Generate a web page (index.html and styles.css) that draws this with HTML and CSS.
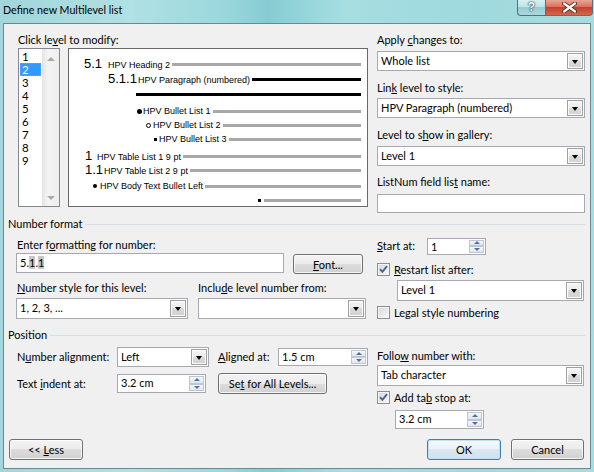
FILE: index.html
```html
<!DOCTYPE html>
<html>
<head>
<meta charset="utf-8">
<title>Define new Multilevel list</title>
<link rel="stylesheet" href="styles.css">
</head>
<body>
<div class="window">
  <div class="titlebar">
    <div class="title">Define new Multilevel list</div>
    <div class="caps">
      <div class="cap cap-help"><span class="qmark">?</span></div>
      <div class="cap cap-close">
        <svg width="15" height="11" viewBox="0 0 15 11"><path d="M2 1.5 L13 9.5 M13 1.5 L2 9.5" stroke="#4a2a22" stroke-width="4" stroke-linecap="round"/><path d="M2 1.5 L13 9.5 M13 1.5 L2 9.5" stroke="#ffffff" stroke-width="2.2" stroke-linecap="round"/></svg>
      </div>
    </div>
  </div>
  <div class="client">
    <div class="sec-top">
      <div class="levels-col">
        <div class="lbl">Click le<u>v</u>el to modify:</div>
        <div class="lists">
          <div class="listbox">
            <div class="items">
              <div class="item">1</div>
              <div class="item sel">2</div>
              <div class="item">3</div>
              <div class="item">4</div>
              <div class="item">5</div>
              <div class="item">6</div>
              <div class="item">7</div>
              <div class="item">8</div>
              <div class="item">9</div>
            </div>
            <div class="vscroll"><span class="sarrow up"></span><span class="sarrow down"></span></div>
          </div>
          <div class="preview">
            <div class="pv r1"><span class="num n24">5.1</span><span class="txt">HPV Heading 2</span><span class="ln"></span></div>
            <div class="pv r2"><span class="num n30">5.1.1</span><span class="txt">HPV Paragraph (numbered)</span><span class="ln blk"></span></div>
            <div class="pv r3"><span class="ln blk flat"></span></div>
            <div class="pv r4"><span class="bul b6"><i class="dot"></i></span><span class="txt">HPV Bullet List 1</span><span class="ln"></span></div>
            <div class="pv r5"><span class="bul b7"><i class="ring"></i></span><span class="txt">HPV Bullet List 2</span><span class="ln"></span></div>
            <div class="pv r6"><span class="bul b5"><i class="sq"></i></span><span class="txt">HPV Bullet List 3</span><span class="ln"></span></div>
            <div class="pv r7"><span class="num n12">1</span><span class="txt">HPV Table List 1 9 pt</span><span class="ln"></span></div>
            <div class="pv r8"><span class="num n19">1.1</span><span class="txt">HPV Table List 2 9 pt</span><span class="ln"></span></div>
            <div class="pv r9"><span class="bul b7"><i class="dot small"></i></span><span class="txt">HPV Body Text Bullet Left</span><span class="ln"></span></div>
            <div class="pv r10"><span class="bul b6"><i class="sq"></i></span><span class="ln flat"></span></div>
          </div>
        </div>
      </div>
      <div class="side">
        <div class="lbl">Apply <u>c</u>hanges to:</div>
        <div class="select h20 mt4"><span class="val">Whole list</span><span class="drop"><i></i></span></div>
        <div class="lbl mt10">Lin<u>k</u> level to style:</div>
        <div class="select h20 mt3"><span class="val">HPV Paragraph (numbered)</span><span class="drop"><i></i></span></div>
        <div class="lbl mt10">Level to s<u>h</u>ow in gallery:</div>
        <div class="select h20 mt4"><span class="val">Level 1</span><span class="drop"><i></i></span></div>
        <div class="lbl mt9">ListNum field lis<u>t</u> name:</div>
        <div class="tb name mt5"></div>
      </div>
    </div>

    <div class="legend lg-fmt"><span>Number format</span><span class="rule"></span></div>

    <div class="sec-fmt">
      <div class="fmt-left">
        <div class="lbl pl1 mt1">Enter f<u>o</u>rmatting for number:</div>
        <div class="row-fmt">
          <div class="tb fmt">5.<span class="fld">1</span>.<span class="fld">1</span></div>
          <div class="btn font"><span><u>F</u>ont...</span></div>
        </div>
        <div class="pair-labels">
          <div class="lbl first"><u>N</u>umber style for this level:</div>
          <div class="lbl">Inclu<u>d</u>e level number from:</div>
        </div>
        <div class="pair-selects">
          <div class="select h21 w172"><span class="val">1, 2, 3, ...</span><span class="drop"><i></i></span></div>
          <div class="select h21 w168"><span class="val"></span><span class="drop"><i></i></span></div>
        </div>
      </div>
      <div class="fmt-right">
        <div class="start">
          <div class="lbl w50"><u>S</u>tart at:</div>
          <div class="spin w59 h17"><span class="val">1</span><span class="arr"><span><i class="tu"></i></span><span><i class="td"></i></span></span></div>
        </div>
        <div class="chkrow mt8">
          <span class="chk"><svg width="11" height="11" viewBox="0 0 11 11"><path d="M2 5.2 L4.4 7.8 L9 2.2" fill="none" stroke="#4a5f98" stroke-width="1.9"/></svg></span>
          <span class="lbl"><u>R</u>estart list after:</span>
        </div>
        <div class="select h21 w187 mt4 ml20"><span class="val">Level 1</span><span class="drop"><i></i></span></div>
        <div class="chkrow mt5">
          <span class="chk"></span>
          <span class="lbl">Le<u>g</u>al style numbering</span>
        </div>
      </div>
    </div>

    <div class="legend lg-pos"><span>Position</span><span class="rule"></span></div>

    <div class="sec-pos">
      <div class="pos-left">
        <div class="prow">
          <div class="lbl w100">N<u>u</u>mber alignment:</div>
          <div class="select h20 w92"><span class="val">Left</span><span class="drop"><i></i></span></div>
          <div class="lbl w60 ml9"><u>A</u>ligned at:</div>
          <div class="spin w90 h18"><span class="val">1.5 cm</span><span class="arr"><span><i class="tu"></i></span><span><i class="td"></i></span></span></div>
        </div>
        <div class="prow prow2">
          <div class="lbl w100">Text <u>i</u>ndent at:</div>
          <div class="spin w89 h19"><span class="val">3.2 cm</span><span class="arr"><span><i class="tu"></i></span><span><i class="td"></i></span></span></div>
          <div class="btn setall"><span>Se<u>t</u> for All Levels...</span></div>
        </div>
      </div>
      <div class="pos-right">
        <div class="lbl mt2">Follo<u>w</u> number with:</div>
        <div class="select h21 w207 mt2"><span class="val">Tab character</span><span class="drop"><i></i></span></div>
        <div class="chkrow mt5">
          <span class="chk"><svg width="11" height="11" viewBox="0 0 11 11"><path d="M2 5.2 L4.4 7.8 L9 2.2" fill="none" stroke="#4a5f98" stroke-width="1.9"/></svg></span>
          <span class="lbl">Add ta<u>b</u> stop at:</span>
        </div>
        <div class="spin w89 h19 mt6 ml18"><span class="val">3.2 cm</span><span class="arr"><span><i class="tu"></i></span><span><i class="td"></i></span></span></div>
      </div>
    </div>

    <div class="sec-btns">
      <div class="btn less"><span>&lt;&lt; <u>L</u>ess</span></div>
      <div class="btn ok"><span>OK</span></div>
      <div class="btn cancel"><span>Cancel</span></div>
    </div>
  </div>
</div>
</body>
</html>
```
FILE: styles.css
```css
* { box-sizing: border-box; }
body {
  margin: 0;
  width: 594px;
  height: 472px;
  overflow: hidden;
  font-family: Lato, "Liberation Sans", Arial, sans-serif;
  font-size: 11px;
  color: #000;
}
u { text-decoration: underline; text-underline-offset: 1px; }

.window {
  width: 594px;
  height: 472px;
  display: flex;
  flex-direction: column;
  background: linear-gradient(90deg, #a2d6da 0%, #b0e1e4 22%, #9ad7dc 38%, #86ccd2 45%, #a6dee2 58%, #9fd9dd 80%, #a8dcdf 100%);
}
.titlebar { height: 23px; flex: none; display: flex; }
.title { padding: 3px 0 0 3px; line-height: 14px; font-size: 10.7px; white-space: nowrap; }
.caps { margin-left: auto; margin-right: 1px; display: flex; height: 16px; }
.cap {
  height: 16px;
  border: 1px solid #52737a;
  border-top: none;
  display: flex;
  align-items: center;
  justify-content: center;
}
.cap-help {
  width: 28px;
  border-right: none;
  border-radius: 0 0 0 4px;
  background: linear-gradient(#d9eff1, #bfe3e6 45%, #95cdd2 50%, #acdadd);
}
.qmark {
  font-family: "Liberation Sans", Arial, sans-serif;
  font-weight: bold;
  font-size: 12px;
  line-height: 12px;
  color: #fff;
  margin-top: -2px;
  text-shadow: 0 0 1px #2e4a50, 0 0 1px #2e4a50, 0 0 2px #2e4a50;
}
.cap-close {
  width: 48px;
  border-radius: 0 0 4px 0;
  background: linear-gradient(#eaa594, #d9735d 45%, #c4422b 50%, #d5664f);
}
.cap-close svg { display: block; margin-top: -1px; }

.client {
  flex: none;
  height: 446px;
  margin: 0 3px;
  border: 1px solid #6b8a8e;
  background: #f0f0f0;
  display: flex;
  flex-direction: column;
}

.lbl { line-height: 14px; height: 14px; white-space: nowrap; }
.mt1 { margin-top: 1px; }
.mt2 { margin-top: 2px; }
.mt3 { margin-top: 3px; }
.mt4 { margin-top: 4px; }
.mt5 { margin-top: 5px; }
.mt6 { margin-top: 6px; }
.mt8 { margin-top: 8px; }
.mt9 { margin-top: 9px; }
.mt10 { margin-top: 10px; }
.ml9 { margin-left: 9px; }
.ml18 { margin-left: 18px; }
.ml20 { margin-left: 20px; }
.pl1 { padding-left: 1px; }
.w50 { width: 50px; flex: none; }
.w59 { width: 59px; }
.w60 { width: 60px; flex: none; }
.w89 { width: 89px; }
.w90 { width: 90px; }
.w92 { width: 92px; }
.w100 { width: 100px; flex: none; }
.w168 { width: 168px; }
.w172 { width: 172px; }
.w187 { width: 187px; }
.w207 { width: 207px; }
.h17 { height: 17px; }
.h18 { height: 18px; }
.h19 { height: 19px; }
.h20 { height: 20px; }
.h21 { height: 21px; }

/* top section */
.sec-top { display: flex; margin-top: 9px; flex: none; }
.levels-col { margin-left: 14px; width: 350px; flex: none; }
.lists { display: flex; gap: 8px; margin-top: 1px; }
.listbox {
  width: 42px;
  height: 159px;
  border: 1px solid #828790;
  background: #fff;
  display: flex;
}
.items { width: 23px; padding: 1px; background: #fff; flex: none; }
.item { height: 13px; line-height: 13px; padding-left: 2px; font-size: 11.5px; }
.item.sel {
  background: #3399ff;
  color: #fff;
  outline: 1px dotted #e8892a;
  outline-offset: -1px;
}
.vscroll {
  flex: 1;
  background: linear-gradient(90deg, #e4e4e4, #f4f4f4 35%, #eeeeee);
  display: flex;
  flex-direction: column;
  justify-content: space-between;
  align-items: center;
  padding: 8px 0 6px;
}
.sarrow { width: 0; height: 0; border-left: 4px solid transparent; border-right: 4px solid transparent; }
.sarrow.up { border-bottom: 4px solid #a9a9a9; }
.sarrow.down { border-top: 4px solid #a9a9a9; }

.preview {
  width: 300px;
  height: 159px;
  border: 1px solid #6a6a6a;
  background: #fff;
  padding: 8px 6px 0 0;
  font-family: "Liberation Sans", Arial, sans-serif;
  font-size: 9px;
  flex: none;
}
.pv { display: flex; align-items: baseline; height: 14px; line-height: 14px; white-space: nowrap; }
.pv .num { font-size: 13px; flex: none; }
.pv .txt { flex: none; }
.pv .ln { flex: 1; height: 3px; background: #a8a8a8; margin-left: 2px; align-self: center; }
.pv .ln.blk { background: #000; }
.pv .ln.flat { margin-left: 0; }
.n12 { width: 12px; }
.n19 { width: 19px; }
.n24 { width: 24px; }
.n30 { width: 30px; }
.bul { flex: none; align-self: center; display: flex; align-items: center; }
.b5 { width: 5px; }
.b6 { width: 6px; }
.b7 { width: 7px; }
.dot { display: block; width: 5px; height: 5px; border-radius: 50%; background: #000; }
.dot.small { width: 4px; height: 4px; }
.ring { display: block; width: 5px; height: 5px; border-radius: 50%; border: 1px solid #000; }
.sq { display: block; width: 3px; height: 3px; background: #000; }
.r1 { margin-left: 15px; }
.r2 { margin-left: 39px; margin-top: 1px; }
.r3 { margin-left: 67px; margin-top: 1px; }
.r4 { margin-left: 68px; margin-top: 3px; }
.r5 { margin-left: 77px; }
.r6 { margin-left: 85px; }
.r7 { margin-left: 16px; margin-top: 3px; }
.r8 { margin-left: 16px; }
.r9 { margin-left: 24px; margin-top: 2px; }
.r10 { margin-left: 189px; }

.side { margin-left: 9px; width: 208px; flex: none; }

/* controls */
.select {
  display: flex;
  border: 1px solid #a6a9b1;
  background: #fff;
  flex: none;
}
.select .val { flex: 1; padding-left: 3px; line-height: 17px; white-space: nowrap; overflow: hidden; }
.select.h21 .val { line-height: 18px; }
.drop {
  width: 16px;
  flex: none;
  margin: 1px;
  border: 1px solid #a0a0a0;
  background: linear-gradient(#f7f7f7, #e8e8e8 50%, #dadada 50%, #d2d2d2);
  box-shadow: inset 0 0 0 1px #fbfbfb;
  display: flex;
  align-items: center;
  justify-content: center;
}
.drop i {
  display: block;
  width: 0;
  height: 0;
  border-left: 3.5px solid transparent;
  border-right: 3.5px solid transparent;
  border-top: 4px solid #000;
  margin-top: 1px;
}
.tb {
  border: 1px solid #a6a9b1;
  background: #fff;
  padding-left: 3px;
  white-space: nowrap;
  flex: none;
}
.tb.name { width: 208px; height: 19px; }
.tb.fmt { width: 268px; height: 20px; line-height: 18px; }
.fld { background: #c6c6c6; }
.spin { display: flex; border: 1px solid #a6a9b1; background: #fff; flex: none; }
.spin .val { flex: 1; padding-left: 3px; line-height: 15px; white-space: nowrap; }
.spin.h19 .val, .spin.h18 .val { line-height: 16px; }
.spin .arr { width: 15px; margin: 1px; display: flex; flex-direction: column; flex: none; }
.spin .arr > span {
  flex: 1;
  border: 1px solid #bcc7d6;
  background: linear-gradient(#f5f8fb, #dfe6ef);
  display: flex;
  align-items: center;
  justify-content: center;
}
.tu { display: block; width: 0; height: 0; border-left: 3px solid transparent; border-right: 3px solid transparent; border-bottom: 3px solid #56709a; }
.td { display: block; width: 0; height: 0; border-left: 3px solid transparent; border-right: 3px solid transparent; border-top: 3px solid #56709a; }

.btn {
  display: flex;
  align-items: center;
  justify-content: center;
  height: 21px;
  border: 1px solid #707070;
  border-radius: 3px;
  background: linear-gradient(#f3f3f3, #ececec 50%, #dddddd 50%, #d0d0d0);
  box-shadow: inset 0 0 0 1px rgba(255, 255, 255, 0.75);
  white-space: nowrap;
  flex: none;
}
.btn.font { width: 70px; height: 20px; margin-left: 9px; margin-top: 1px; }
.btn.setall { width: 109px; margin-left: 12px; }
.btn.less { width: 74px; margin-left: 5px; }
.btn.ok {
  width: 74px;
  margin-left: auto;
  border-color: #3c7fb1;
  background: linear-gradient(#f4f9fc, #e9f2f8 50%, #dbe8f2 50%, #d0e0ec);
  box-shadow: inset 0 0 0 1px #bfe3f6;
}
.btn.cancel { width: 73px; margin-left: 10px; margin-right: 6px; }

.chkrow { display: flex; align-items: center; height: 13px; }
.chkrow .lbl { margin-left: 4px; }
.chk {
  width: 13px;
  height: 13px;
  flex: none;
  border: 1px solid #8e8f8f;
  background: linear-gradient(135deg, #d4d6da, #f9f9f9);
  box-shadow: inset 0 0 0 1px #f6f6f6;
}
.chk svg { display: block; }

/* legends */
.legend {
  display: flex;
  align-items: center;
  height: 14px;
  line-height: 14px;
  margin-left: 4px;
  margin-right: 5px;
  flex: none;
  white-space: nowrap;
}
.legend .rule { flex: 1; border-top: 1px solid #d5dfe5; margin-left: 3px; }
.lg-fmt { margin-top: 4px; }
.lg-pos { margin-top: 9px; }

/* number format */
.sec-fmt { display: flex; margin-top: 6px; flex: none; }
.fmt-left { margin-left: 12px; width: 350px; flex: none; }
.row-fmt { display: flex; align-items: flex-start; margin-top: 1px; }
.pair-labels { display: flex; margin-top: 7px; }
.pair-labels .first { width: 182px; padding-left: 1px; }
.pair-selects { display: flex; gap: 10px; margin-top: 3px; }
.fmt-right { margin-left: 11px; width: 208px; flex: none; }
.start { display: flex; align-items: center; height: 18px; }

/* position */
.sec-pos { display: flex; margin-top: 5px; flex: none; }
.pos-left { margin-left: 13px; width: 351px; flex: none; }
.prow { display: flex; align-items: center; height: 20px; }
.prow2 { height: 21px; margin-top: 6px; }
.pos-right { margin-left: 9px; width: 208px; flex: none; }

.sec-btns { display: flex; align-items: flex-start; margin-top: 10px; flex: none; }
```
